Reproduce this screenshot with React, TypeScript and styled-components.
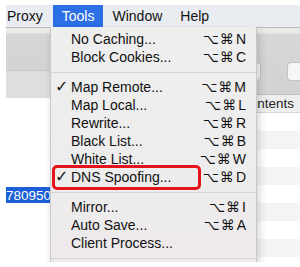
import React from "react";
import styled, { createGlobalStyle } from "styled-components";

const GlobalStyle = createGlobalStyle`
  html, body { margin: 0; padding: 0; background: #ffffff; }
  * { box-sizing: border-box; }
`;

const SYS = `"Liberation Sans", "DejaVu Sans", Arial, sans-serif`;

const Frame = styled.div`
  width: 300px;
  height: 267px;
  padding: 5px 0 5px 6px;
  background: #ffffff;
  overflow: hidden;
  font-family: ${SYS};
`;

const Screen = styled.div`
  position: relative;
  height: 100%;
  display: flex;
  flex-direction: column;
  overflow: hidden;
`;

const MenuBar = styled.div`
  height: 22px;
  flex: none;
  display: flex;
  align-items: stretch;
  background: #e9ecf0;
`;

const MenuTitle = styled.div<{ $active?: boolean; $first?: boolean }>`
  display: flex;
  align-items: center;
  padding: ${(p) => (p.$first ? "0 10px 0 1px" : "0 9px")};
  font-size: 14px;
  color: ${(p) => (p.$active ? "#ffffff" : "#111111")};
  background: ${(p) => (p.$active ? "#2c6fe6" : "transparent")};
`;

const Content = styled.div`
  flex: 1;
  display: flex;
  border-top: 1px solid #b9b9b9;
  min-height: 0;
`;

const LeftPane = styled.div`
  width: 120px;
  flex: none;
  display: flex;
  flex-direction: column;
  border-right: 1px solid #c9c9c9;
`;

const LeftTop = styled.div`
  height: 42px;
  flex: none;
  background: linear-gradient(#eaeaea 0, #eaeaea 5px, #d6d6d6 6px, #d3d3d3 100%);
`;

const FilterBar = styled.div`
  height: 28px;
  flex: none;
  background: #dedede;
  border-top: 1px solid #c4c4c4;
`;

const LeftList = styled.div`
  flex: 1;
  padding-top: 9px;
  background: #ffffff;
`;

const TreeRow = styled.div<{ $selected?: boolean }>`
  height: 16px;
  display: flex;
  align-items: center;
  font-size: 13.5px;
  white-space: nowrap;
  color: ${(p) => (p.$selected ? "#ffffff" : "#222")};
  background: ${(p) => (p.$selected ? "#1d5fd8" : "transparent")};
`;

const RightPane = styled.div`
  flex: 1;
  display: flex;
  flex-direction: column;
  min-width: 0;
`;

const Toolbar = styled.div`
  height: 67px;
  flex: none;
  display: flex;
  align-items: flex-end;
  gap: 26px;
  padding: 0 0 13px 75px;
  background: linear-gradient(#eaeaea 0, #eaeaea 5px, #d7d7d7 6px, #d2d2d2 100%);
  border-bottom: 1px solid #c2c2c2;
`;

const ToolButton = styled.div<{ $w: number }>`
  width: ${(p) => p.$w}px;
  height: 19px;
  flex: none;
  border-radius: 4px;
  background: #f6f6f6;
  border: 1px solid #c3c3c3;
`;

const HeaderRow = styled.div`
  height: 18px;
  flex: none;
  display: flex;
  align-items: center;
  padding-left: 114px;
  font-size: 13.5px;
  color: #222;
  white-space: nowrap;
  background: #eeeeee;
  border-bottom: 1px solid #d6d6d6;
`;

const DataRow = styled.div<{ $odd: boolean }>`
  height: 18px;
  flex: none;
  background: ${(p) => (p.$odd ? "#f4f4f4" : "#ffffff")};
`;

const Dropdown = styled.div`
  position: absolute;
  left: 44px;
  top: 22px;
  width: 207px;
  padding: 3px 0 20px;
  background: linear-gradient(#eeeeee 0%, #ededed 55%, #eee8ea 100%);
  border-left: 1px solid #c8c8c8;
  border-right: 1px solid #c8c8c8;
  box-shadow: 2px 4px 8px rgba(0, 0, 0, 0.18);
  z-index: 5;
`;

const Item = styled.div`
  position: relative;
  height: 18px;
  display: flex;
  align-items: center;
  padding: 0 10px 0 20px;
  font-size: 14px;
  color: #111111;
`;

const Check = styled.span`
  position: absolute;
  left: 4px;
  top: -1px;
  font-family: "DejaVu Sans", sans-serif;
  font-size: 16px;
  font-weight: bold;
`;

const Label = styled.span`
  flex: 1;
  white-space: nowrap;
`;

const Shortcut = styled.span`
  display: flex;
  align-items: center;
  gap: 1px;
  white-space: nowrap;
`;

const KeyGlyph = styled.span`
  font-family: "DejaVu Sans", sans-serif;
  font-size: 14px;
  letter-spacing: 1px;
`;

const Separator = styled.div`
  height: 12px;
  display: flex;
  align-items: center;
  &::after {
    content: "";
    flex: 1;
    height: 1px;
    background: #d6d6d6;
  }
`;

const Highlight = styled.div`
  position: absolute;
  left: 1px;
  top: -3px;
  width: 149px;
  height: 25px;
  border: 3px solid #e5141c;
  border-radius: 5px;
  pointer-events: none;
`;

type Entry =
  | { sep: true }
  | { label: string; key?: string; checked?: boolean; boxed?: boolean };

const entries: Entry[] = [
  { label: "No Caching...", key: "N" },
  { label: "Block Cookies...", key: "C" },
  { sep: true },
  { label: "Map Remote...", key: "M", checked: true },
  { label: "Map Local...", key: "L" },
  { label: "Rewrite...", key: "R" },
  { label: "Black List...", key: "B" },
  { label: "White List...", key: "W" },
  { label: "DNS Spoofing...", key: "D", checked: true, boxed: true },
  { sep: true },
  { label: "Mirror...", key: "I" },
  { label: "Auto Save...", key: "A" },
  { label: "Client Process..." },
  { sep: true },
];

export default function App() {
  return (
    <>
      <GlobalStyle />
      <Frame>
        <Screen>
          <MenuBar>
            <MenuTitle $first>Proxy</MenuTitle>
            <MenuTitle $active>Tools</MenuTitle>
            <MenuTitle>Window</MenuTitle>
            <MenuTitle>Help</MenuTitle>
          </MenuBar>
          <Content>
            <LeftPane>
              <LeftTop />
              <FilterBar />
              <LeftList>
                {[0, 1, 2, 3, 4].map((i) => (
                  <TreeRow key={i} />
                ))}
                <TreeRow $selected>780950C</TreeRow>
              </LeftList>
            </LeftPane>
            <RightPane>
              <Toolbar>
                <ToolButton $w={60} />
                <ToolButton $w={40} />
              </Toolbar>
              <HeaderRow>Contents</HeaderRow>
              {Array.from({ length: 9 }).map((_, i) => (
                <DataRow key={i} $odd={i % 2 === 1} />
              ))}
            </RightPane>
          </Content>
          <Dropdown>
            {entries.map((e, i) =>
              "sep" in e ? (
                <Separator key={i} />
              ) : (
                <Item key={i}>
                  {e.checked && <Check>✓</Check>}
                  <Label>{e.label}</Label>
                  {e.key && (
                    <Shortcut>
                      <KeyGlyph>⌥⌘</KeyGlyph>
                      {e.key}
                    </Shortcut>
                  )}
                  {e.boxed && <Highlight />}
                </Item>
              )
            )}
          </Dropdown>
        </Screen>
      </Frame>
    </>
  );
}
